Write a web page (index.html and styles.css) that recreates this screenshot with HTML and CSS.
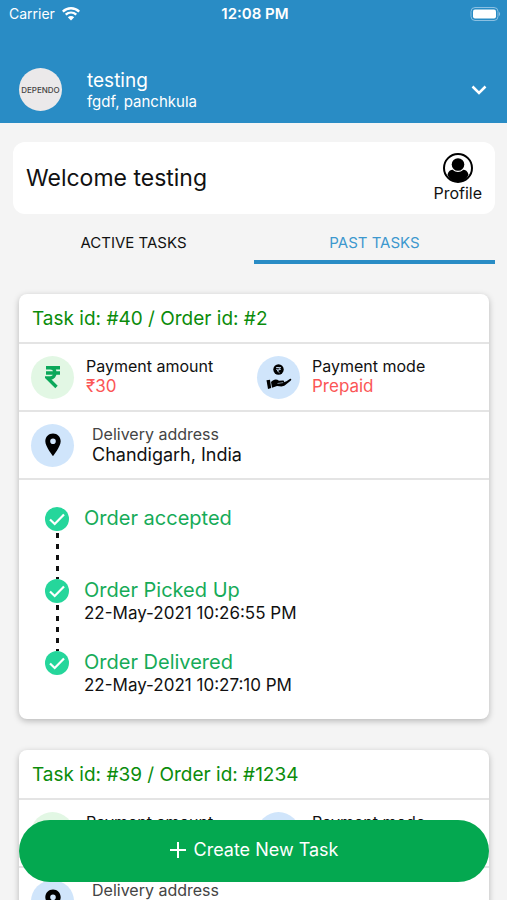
FILE: index.html
```html
<!DOCTYPE html>
<html lang="en">
<head>
<meta charset="utf-8">
<meta name="viewport" content="width=device-width, initial-scale=1">
<title>Tasks</title>
<link rel="stylesheet" href="styles.css">
</head>
<body>
<svg class="sprite" aria-hidden="true">
  <symbol id="rupee" viewBox="0 0 16 24">
    <path d="M1 2.700H15M1 8H15M2 2.700H5C11.700 2.700 11.700 13 5 13H2.500L11.500 22" fill="none" stroke="currentColor" stroke-width="3.400"/>
  </symbol>
  <symbol id="hand" viewBox="0 0 26 26">
    <circle cx="12.500" cy="5.500" r="5.200" fill="#000"/>
    <path d="M10 3.500H15M10 5.300H15M11 3.500C15 3.500 14.500 7 11 6.500L13.500 8.700" fill="none" stroke="#d0e5fb" stroke-width=".8"/>
    <path d="M.5 16.200L4 15.700L5.200 24L2 25Z" fill="#000"/>
    <path d="M5 18C7.500 15 10.500 14.700 13 16.700L17 16.500C18.500 16.500 18.500 18 17.200 18.500L20.500 17.300L23.800 14.900C25.400 14.300 25.800 15.600 24.600 16.700L19 21.300C17 23 14 22.300 11 22L6 23.700Z" fill="#000"/>
    <path d="M11.500 19.500L17 18.600" stroke="#d0e5fb" stroke-width=".6"/>
  </symbol>
  <symbol id="pin" viewBox="0 0 16 24">
    <path d="M8 .5C3.700 .5 .3 3.900 .3 8.200C.3 13.500 8 23 8 23S15.700 13.500 15.700 8.200C15.700 3.900 12.300 .5 8 .5ZM8 11A2.800 2.800 0 1 1 8 5.400A2.800 2.800 0 0 1 8 11Z" fill="#000"/>
  </symbol>
  <symbol id="check" viewBox="0 0 24 24">
    <circle cx="12" cy="12" r="12" fill="#25d69b"/>
    <path d="M5 12.500L9.700 17L19 7.500" fill="none" stroke="#fff" stroke-width="2.200"/>
  </symbol>
</svg>
<div class="app">
  <header class="top">
    <div class="status">
      <div class="carrier">Carrier
        <svg width="18" height="14" viewBox="0 0 18 14" aria-hidden="true"><path d="M.8 4.600C5.500 .2 12.500 .2 17.200 4.600M3.700 7.700C6.800 4.900 11.200 4.900 14.300 7.700" fill="none" stroke="#fff" stroke-width="2.400"/><path d="M9 13.500L5.800 10.200C7.500 8.700 10.500 8.700 12.200 10.200Z" fill="#fff"/></svg>
      </div>
      <div class="clock">12:08 PM</div>
      <div class="battery"><svg width="31" height="14" viewBox="0 0 31 14" aria-hidden="true"><rect x="1" y=".5" width="27" height="13" rx="4" fill="none" stroke="#8bc0e2"/><rect x="3" y="2.500" width="23" height="9" rx="2" fill="#fff"/><path d="M29 5V9C30.500 8.500 30.500 5.500 29 5Z" fill="#8bc0e2"/></svg></div>
    </div>
    <div class="account">
      <div class="logo">DEPENDO</div>
      <div class="who">
        <div class="name">testing</div>
        <div class="place">fgdf, panchkula</div>
      </div>
      <button class="expand" type="button" aria-label="Expand">
        <svg width="16" height="10" viewBox="0 0 16 10" aria-hidden="true"><path d="M1.500 1.500L8 8L14.500 1.500" fill="none" stroke="#fff" stroke-width="2.500"/></svg>
      </button>
    </div>
  </header>
  <main class="body">
    <section class="welcome">
      <h1>Welcome testing</h1>
      <a class="profile" href="#profile">
        <svg width="30" height="30" viewBox="0 0 30 30" aria-hidden="true"><circle cx="15" cy="15" r="14" fill="#fff" stroke="#000" stroke-width="2"/><circle cx="15" cy="11.500" r="6.300"/><path d="M4.500 21.500C5.500 18 7.500 17 9.800 16.800C12.800 19.800 17.200 19.800 20.200 16.800C22.500 17 24.500 18 25.500 21.500C23.500 27 19.500 29 15 29S6.500 27 4.500 21.500Z"/></svg>
        Profile
      </a>
    </section>
    <nav class="tabs">
      <button type="button" class="tab">ACTIVE TASKS</button>
      <button type="button" class="tab selected">PAST TASKS</button>
    </nav>
    <div class="list">
      <article class="card">
        <h2>Task id: #40 / Order id: #2</h2>
        <div class="row payment">
          <div class="cell">
            <span class="disc green"><svg width="16" height="24"><use href="#rupee"/></svg></span>
            <div class="info"><div class="label">Payment amount</div><div class="value">₹30</div></div>
          </div>
          <div class="cell">
            <span class="disc"><svg width="26" height="26"><use href="#hand"/></svg></span>
            <div class="info"><div class="label">Payment mode</div><div class="value">Prepaid</div></div>
          </div>
        </div>
        <div class="row address">
          <span class="disc"><svg width="16" height="24"><use href="#pin"/></svg></span>
          <div class="info"><div class="label">Delivery address</div><div class="street">Chandigarh, India</div></div>
        </div>
        <ol class="steps">
          <li><div class="mark"><svg width="24" height="24"><use href="#check"/></svg></div><div><div class="step">Order accepted</div></div></li>
          <li><div class="mark"><svg width="24" height="24"><use href="#check"/></svg></div><div><div class="step">Order Picked Up</div><time>22-May-2021 10:26:55 PM</time></div></li>
          <li><div class="mark"><svg width="24" height="24"><use href="#check"/></svg></div><div><div class="step">Order Delivered</div><time>22-May-2021 10:27:10 PM</time></div></li>
        </ol>
      </article>
      <article class="card">
        <h2>Task id: #39 / Order id: #1234</h2>
        <div class="row payment">
          <div class="cell">
            <span class="disc green"><svg width="16" height="24"><use href="#rupee"/></svg></span>
            <div class="info"><div class="label">Payment amount</div></div>
          </div>
          <div class="cell">
            <span class="disc"><svg width="26" height="26"><use href="#hand"/></svg></span>
            <div class="info"><div class="label">Payment mode</div></div>
          </div>
        </div>
        <div class="row address">
          <span class="disc"><svg width="16" height="24"><use href="#pin"/></svg></span>
          <div class="info"><div class="label">Delivery address</div></div>
        </div>
      </article>
    </div>
  </main>
  <button class="create" type="button">
    <svg width="16" height="16" viewBox="0 0 16 16" aria-hidden="true"><path d="M8 0V16M0 8H16" stroke="#fff" stroke-width="2"/></svg>
    Create New Task
  </button>
</div>
</body>
</html>
```

FILE: styles.css
```css
* {
  box-sizing: border-box;
}

body {
  margin: 0;
  background: #f4f4f4;
  color: #111;
  font-family: Inter, "Liberation Sans", sans-serif;
  font-size: 16px;
}

button {
  font: inherit;
  border: 0;
  padding: 0;
  background: none;
  cursor: pointer;
}

svg {
  display: block;
  flex: none;
}

.sprite {
  position: absolute;
  width: 0;
  height: 0;
}

.app {
  display: flex;
  flex-direction: column;
  height: 100vh;
  overflow: hidden;
}

.top {
  flex: none;
  padding-bottom: 11px;
  background: #298cc5;
  color: #fff;
}

.status {
  display: grid;
  grid-template-columns: 1fr auto 1fr;
  align-items: center;
  height: 27px;
  padding: 0 6px 0 9px;
  font-size: 14px;
}

.carrier {
  display: flex;
  align-items: center;
  gap: 7px;
}

.clock {
  font-size: 15px;
  font-weight: 600;
}

.battery {
  justify-self: end;
}

.account {
  display: flex;
  align-items: center;
  margin-top: 40px;
  padding: 0 20px 0 19px;
}

.logo {
  display: grid;
  place-items: center;
  width: 43px;
  height: 43px;
  border-radius: 50%;
  background: #ebe9ea;
  color: #444;
  font-size: 8px;
  font-weight: 500;
}

.who {
  flex: 1;
  margin-left: 25px;
  padding-top: 2px;
}

.name {
  font-size: 19px;
  line-height: 23px;
}

.place {
  font-size: 15px;
  line-height: 20px;
}

.body {
  flex: 1;
  min-height: 0;
  padding: 19px 12px 0 13px;
  overflow: hidden;
}

.welcome {
  display: flex;
  align-items: center;
  justify-content: space-between;
  height: 72px;
  padding: 0 13px;
  border-radius: 12px;
  background: #fff;
}

h1 {
  margin: 0;
  font-size: 23px;
  font-weight: 400;
}

.profile {
  display: flex;
  flex-direction: column;
  align-items: center;
  color: inherit;
  font-size: 16px;
  line-height: 20px;
  text-decoration: none;
}

.tabs {
  display: grid;
  grid-template-columns: 1fr 1fr;
}

.tab {
  height: 50px;
  padding-top: 10px;
  border-bottom: 4px solid transparent;
  color: #111;
  font-size: 15px;
}

.tab.selected {
  border-color: #298cc5;
  color: #3d98ce;
}

.list {
  display: grid;
  gap: 31px;
  padding: 30px 6px;
}

.card {
  border-radius: 8px;
  background: #fff;
  box-shadow: 0 2px 6px rgba(0, 0, 0, 0.25);
}

h2 {
  margin: 0;
  padding: 2px 0 0 13px;
  color: #0b8c0b;
  font-size: 19px;
  font-weight: 400;
  line-height: 46px;
}

.row {
  display: flex;
  align-items: center;
  height: 68px;
  padding-left: 12px;
  border-top: 2px solid #e4e4e4;
}

.payment {
  display: grid;
  grid-template-columns: 1fr 1fr;
  padding-right: 6px;
}

.cell {
  display: flex;
  align-items: center;
  gap: 12px;
}

.disc {
  display: grid;
  flex: none;
  place-items: center;
  width: 43px;
  height: 43px;
  border-radius: 50%;
  background: #d0e5fb;
}

.disc.green {
  background: #e2f7e4;
  color: #0ba85a;
}

.info {
  min-height: 42px;
}

.label {
  font-size: 16px;
  line-height: 20px;
}

.value {
  color: #fb5656;
  font-size: 17px;
  line-height: 21px;
}

.address {
  gap: 18px;
}

.address .label {
  color: #444;
}

.street {
  font-size: 18px;
  line-height: 21px;
}

.steps {
  margin: 0;
  padding: 25px 26px 22px;
  border-top: 2px solid #e4e4e4;
  list-style: none;
}

.steps li {
  display: flex;
  gap: 15px;
  min-height: 72px;
}

.steps li:last-child {
  min-height: 48px;
}

.mark {
  display: flex;
  flex-direction: column;
  align-items: center;
  padding-top: 2px;
}

.steps li:not(:last-child) .mark::after {
  content: "";
  flex: 1;
  width: 3px;
  margin-top: 2px;
  margin-bottom: -2px;
  background: repeating-linear-gradient(#111 0 5px, transparent 5px 11px);
}

.step {
  color: #16ab58;
  font-size: 20px;
  line-height: 26px;
}

time {
  display: block;
  font-size: 17px;
  line-height: 20px;
}

.create {
  position: fixed;
  right: 18px;
  bottom: 18px;
  left: 19px;
  display: flex;
  align-items: center;
  justify-content: center;
  gap: 8px;
  height: 62px;
  padding-bottom: 3px;
  border-radius: 31px;
  background: #04a850;
  color: #fff;
  font-size: 18px;
}
```
